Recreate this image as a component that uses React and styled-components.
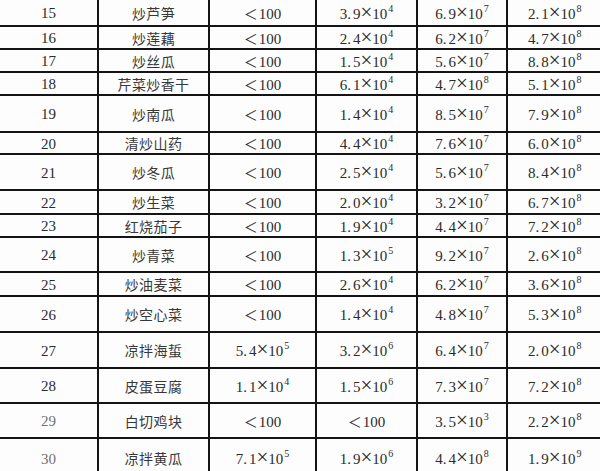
import React from "react";
import styled, { createGlobalStyle } from "styled-components";

const Global = createGlobalStyle`
  html, body { margin: 0; padding: 0; background: #fff; }
  body { font-family: "Liberation Serif", "Noto Sans CJK SC", serif; }
`;

const Page = styled.div`
  width: 600px;
  height: 471px;
  overflow: hidden;
  background: #fdfdfd;
`;

const Table = styled.div`
  display: flex;
  flex-direction: column;
  width: 620px;
`;

const Row = styled.div`
  display: grid;
  grid-template-columns: 97px 111px 107px 101px 90px 114px;
  height: ${(p) => p.$h}px;
  flex: none;
  border-bottom: 2px solid #141414;
  box-sizing: border-box;
`;

const Cell = styled.div`
  display: flex;
  align-items: center;
  justify-content: center;
  box-sizing: border-box;
  padding-top: 2px;
  line-height: 1;
  min-height: 0;
  border-left: ${(p) => (p.$first ? "none" : "2px solid #141414")};
  color: ${(p) => (p.$faded ? "#707070" : "#2b2b2b")};
  font-family: "Liberation Serif", serif;
  font-size: 15px;
  white-space: nowrap;
  ${(p) => (p.$last ? "justify-content: flex-start; padding-left: 20px;" : "")}
`;

const Name = styled.span`
  font-family: "Noto Sans CJK SC", sans-serif;
  font-size: 14px;
  letter-spacing: 0.4px;
  line-height: 14px;
  height: 14px;
  font-weight: 400;
  color: #383838;
  position: relative;
  top: -1px;
`;

const Lt = styled.span`
  font-family: "Noto Sans CJK SC", sans-serif;
  font-size: 14px;
  line-height: 10px;
  margin-right: 1px;
`;

const Times = styled.span`
  font-family: "Liberation Serif", serif;
  font-size: 21px;
  line-height: 10px;
`;

const Dot = styled.span`
  margin-right: 2px;
`;

const Sup = styled.span`
  font-size: 10px;
  line-height: 10px;
  position: relative;
  top: -7px;
  margin-left: 1px;
`;

const Num = styled.span`
  display: inline-flex;
  align-items: baseline;
  line-height: 14px;
  height: 14px;
`;

function Sci({ v }) {
  if (v === "<") {
    return (
      <Num>
        <Lt>＜</Lt>100
      </Num>
    );
  }
  const [m, e] = v.split("e");
  const [a, b] = m.split(".");
  return (
    <Num>
      {a}
      <Dot>.</Dot>
      {b}
      <Times>×</Times>10<Sup>{e}</Sup>
    </Num>
  );
}

const rows = [
  [15, "炒芦笋", "<", "3.9e4", "6.9e7", "2.1e8", 27],
  [16, "炒莲藕", "<", "2.4e4", "6.2e7", "4.7e8", 23],
  [17, "炒丝瓜", "<", "1.5e4", "5.6e7", "8.8e8", 23],
  [18, "芹菜炒香干", "<", "6.1e4", "4.7e8", "5.1e8", 23],
  [19, "炒南瓜", "<", "1.4e4", "8.5e7", "7.9e8", 37],
  [20, "清炒山药", "<", "4.4e4", "7.6e7", "6.0e8", 22],
  [21, "炒冬瓜", "<", "2.5e4", "5.6e7", "8.4e8", 36],
  [22, "炒生菜", "<", "2.0e4", "3.2e7", "6.7e8", 24],
  [23, "红烧茄子", "<", "1.9e4", "4.4e7", "7.2e8", 23],
  [24, "炒青菜", "<", "1.3e5", "9.2e7", "2.6e8", 35],
  [25, "炒油麦菜", "<", "2.6e4", "6.2e7", "3.6e8", 24],
  [26, "炒空心菜", "<", "1.4e4", "4.8e7", "5.3e8", 36],
  [27, "凉拌海蜇", "5.4e5", "3.2e6", "6.4e7", "2.0e8", 36],
  [28, "皮蛋豆腐", "1.1e4", "1.5e6", "7.3e7", "7.2e8", 35],
  [29, "白切鸡块", "<", "<", "3.5e3", "2.2e8", 35],
  [30, "凉拌黄瓜", "7.1e5", "1.9e6", "4.4e8", "1.9e9", 40],
];

export default function App() {
  return (
    <Page>
      <Global />
      <Table>
        {rows.map(([n, name, a, b, c, d, h]) => (
          <Row key={n} $h={h}>
            <Cell $first $faded={n >= 29}>{n}</Cell>
            <Cell>
              <Name>{name}</Name>
            </Cell>
            <Cell>
              <Sci v={a} />
            </Cell>
            <Cell>
              <Sci v={b} />
            </Cell>
            <Cell>
              <Sci v={c} />
            </Cell>
            <Cell $last>
              <Sci v={d} />
            </Cell>
          </Row>
        ))}
      </Table>
    </Page>
  );
}
